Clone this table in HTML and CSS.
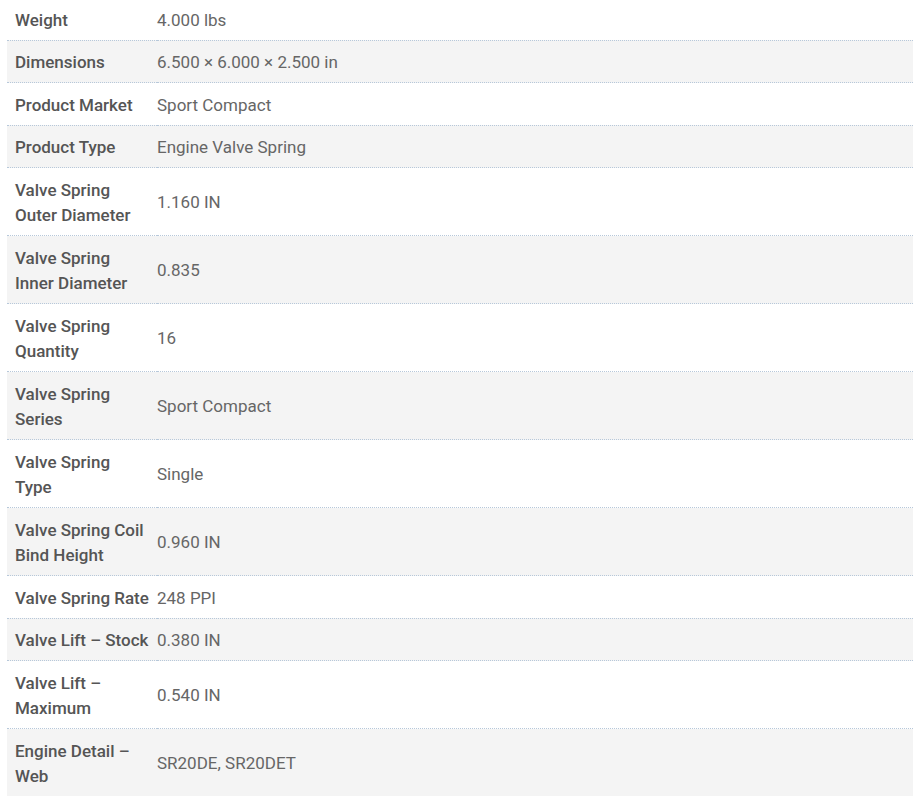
FILE: index.html
```html
<!DOCTYPE html>
<html lang="en">
<head>
<meta charset="utf-8">
<title>Additional information</title>
<link rel="stylesheet" href="styles.css">
</head>
<body>
<div class="page">
<table class="attrs">
<tbody>
<tr><th>Weight</th><td>4.000 lbs</td></tr>
<tr><th>Dimensions</th><td>6.500 × 6.000 × 2.500 in</td></tr>
<tr><th>Product Market</th><td>Sport Compact</td></tr>
<tr><th>Product Type</th><td>Engine Valve Spring</td></tr>
<tr><th>Valve Spring Outer Diameter</th><td>1.160 IN</td></tr>
<tr><th>Valve Spring Inner Diameter</th><td>0.835</td></tr>
<tr><th>Valve Spring Quantity</th><td>16</td></tr>
<tr><th>Valve Spring Series</th><td>Sport Compact</td></tr>
<tr><th>Valve Spring Type</th><td>Single</td></tr>
<tr><th>Valve Spring Coil Bind Height</th><td>0.960 IN</td></tr>
<tr><th>Valve Spring Rate</th><td>248 PPI</td></tr>
<tr><th>Valve Lift – Stock</th><td>0.380 IN</td></tr>
<tr><th>Valve Lift – Maximum</th><td>0.540 IN</td></tr>
<tr><th>Engine Detail – Web</th><td>SR20DE, SR20DET</td></tr>
</tbody>
</table>
</div>
</body>
</html>
```
FILE: styles.css
```css
html, body {
  margin: 0;
  padding: 0;
  background: #ffffff;
}

.page {
  padding-left: 7px;
  font-family: Roboto, "Liberation Sans", sans-serif;
  font-size: 17px;
  line-height: 25.5px;
}

.attrs {
  width: 906px;
  margin-top: -2px;
  border-collapse: collapse;
  border-spacing: 0;
  table-layout: fixed;
}

.attrs tr {
  border-bottom: 1px dotted #b7c8da;
}

.attrs tr:nth-child(even) {
  background: #f4f4f4;
}

.attrs th {
  width: 150px;
  box-sizing: border-box;
  padding: 9.5px 8px 6.5px;
  text-align: left;
  vertical-align: middle;
  font-weight: 500;
  color: #555555;
}

.attrs td {
  padding: 9.5px 0 6.5px;
  vertical-align: middle;
  color: #666666;
}
```
